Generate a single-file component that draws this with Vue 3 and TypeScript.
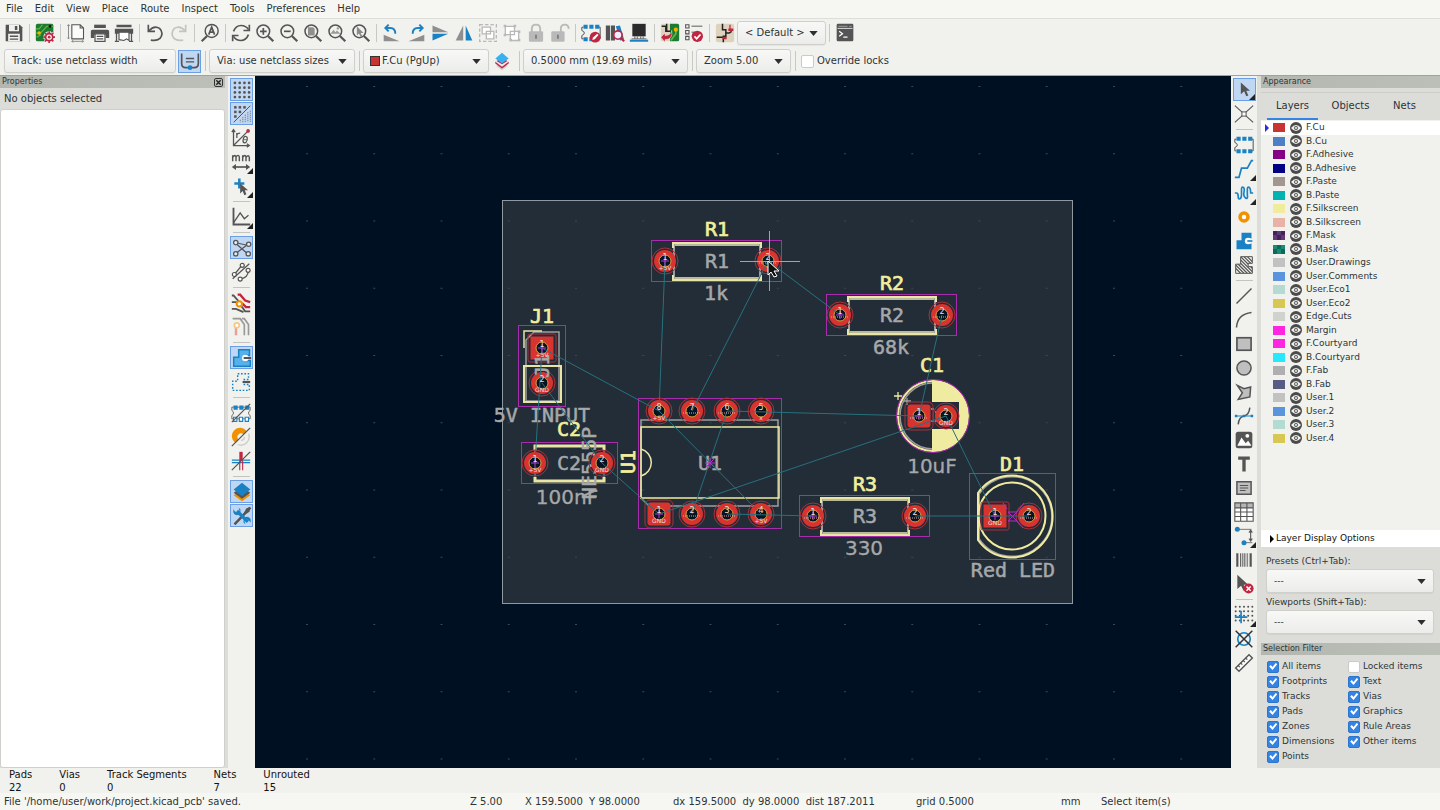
<script setup lang="ts">
import { ref } from 'vue'

type ToolItem = { icon?: string; label?: string; on?: boolean; more?: boolean; off?: boolean }
type Pad = { x: number; y: number; n: string; net?: string; sq?: boolean; round?: boolean; origin?: boolean }

const D = '#545454'
const B = '#1a81c4'
const R = '#bf2641'
const O = '#f29100'
const G = '#b9b9b9'
const lens = `<circle cx="10" cy="10" r="7.6" fill="none" stroke="${D}" stroke-width="1.8"/><path d="M15.5 15.5 22 22" stroke="${D}" stroke-width="2.6"/>`
const chip = `<path d="M3 5H1v4q3 1 3 3t-3 3v4h2M21 5h2v14h-2" fill="none" stroke="${D}" stroke-width="1.2"/><g fill="${B}"><path d="M3 2h5v5H3zM10 2h5v5h-5zM17 2h5v5h-5zM3 17h5v5H3zM10 17h5v5h-5zM17 17h5v5h-5z"/></g>`

const icons: Record<string, string> = {
  save: `<path d="M2 2h17l3 3v17H2z" fill="${D}"/><path d="M6 2h12v8H6zM5 13h14v9H5z" fill="#f1f2ee"/><path d="M13 3.5h3v5h-3zM7 15h10v1.8H7zM7 18.5h10v1.5H7z" fill="${D}"/>`,
  board: `<rect x="1" y="1" width="21" height="21" rx="2" fill="#1d7a33"/><path d="M1 7h4l4-5M1 12h6l7-8h8M2 17l5-3" fill="none" stroke="#65b63c" stroke-width="1.4"/><circle cx="5" cy="12" r="2.2" fill="#e6b800"/><circle cx="18" cy="4" r="1.6" fill="#111"/><path d="M17 10v14M10 17h14M12 12l10 10M22 12 12 22" stroke="#f3f3f3" stroke-width="4"/><circle cx="17" cy="17" r="5.2" fill="${R}"/><path d="M17 10v14M10 17h14M12 12l10 10M22 12 12 22" stroke="${R}" stroke-width="2"/><circle cx="17" cy="17" r="3.2" fill="#f3f3f3"/><circle cx="17" cy="17" r="1.6" fill="${R}"/>`,
  page: `<path d="M7 2h10l4 4v13H7zM17 2v4h4" fill="#fbfbfa" stroke="${D}" stroke-width="1.3"/><path d="M3 2v17M1.5 3.5 3 2l1.5 1.5M1.5 17.5 3 19l1.5-1.5M7 22h14M8.5 20.5 7 22l1.5 1.5M19.5 20.5 21 22l-1.5 1.5" fill="none" stroke="#777"/>`,
  print: `<path d="M5 2h14v4H5z" fill="${D}"/><path d="M3 8h18q2 0 2 2v8h-4v-4H5v4H1v-8q0-2 2-2z" fill="${D}"/><path d="M6 13h12v9H6z" fill="#fff" stroke="${D}" stroke-width="1.5"/><path d="M8 16h8M8 19h8" stroke="${D}" stroke-width="1.3"/>`,
  plot: `<path d="M3 2h18v3H3zM1 7h22v6H1z" fill="${D}"/><path d="M3 12v10M21 12v10M1 22h5M18 22h5" stroke="${D}" stroke-width="1.5"/><path d="M6 11h12v10l-3-2-3 2-6-1z" fill="#fff" stroke="${D}" stroke-width="1.4"/>`,
  undo: `<path d="M4 2v8h8" fill="none" stroke="${D}" stroke-width="2"/><path d="M4.5 9.5Q11 2 17.5 6.5Q23 12 18 18.5Q14 22 7 20.5" fill="none" stroke="${D}" stroke-width="2"/>`,
  redo: `<path d="M20 2v8h-8" fill="none" stroke="#c2c4c0" stroke-width="2"/><path d="M19.5 9.5Q13 2 6.5 6.5Q1 12 6 18.5Q10 22 17 20.5" fill="none" stroke="#c2c4c0" stroke-width="2"/>`,
  find: `<circle cx="14" cy="9.5" r="7.8" fill="none" stroke="${D}" stroke-width="1.7"/><path d="M8.5 15.5 2 22" stroke="${D}" stroke-width="2.6"/><path d="m10.5 14 3.5-9 3.5 9M12 11h4" fill="none" stroke="${D}" stroke-width="2"/>`,
  refresh: `<path d="M3 10Q6 3 12 3q6 0 9 5M21 14q-3 7-9 7-6 0-9-5" fill="none" stroke="${D}" stroke-width="2"/><path d="M22 2v7h-7M2 22v-7h7" fill="none" stroke="${D}" stroke-width="2"/>`,
  zin: lens + `<path d="M6 10h8M10 6v8" stroke="${D}" stroke-width="2"/>`,
  zout: lens + `<path d="M6 10h8" stroke="${D}" stroke-width="2"/>`,
  zfit: `<path d="M6 5h6l2 2v8H6z" fill="#8f8f8f"/>` + lens,
  zobj: `<path d="m4 13 4-5 2 3 2-2 4 4z" fill="#9a9a9a"/><circle cx="13" cy="6.5" r="1.4" fill="#9a9a9a"/>` + lens,
  zsel: `<path d="M7 4v11l2.5-2.5 2 4 2-1-2-3.5h3.5z" fill="#8a8a8a"/>` + lens,
  rccw: `<path d="M2 14v8h19z" fill="#8f8f8f"/><path d="M8 2 4 6l4 4M5 6h5q6 0 6 7" fill="none" stroke="${B}" stroke-width="2.3"/>`,
  rcw: `<path d="M22 14v8H3z" fill="#8f8f8f"/><path d="m16 2 4 4-4 4M19 6h-5q-6 0-6 7" fill="none" stroke="${B}" stroke-width="2.3"/>`,
  mirv: `<path d="M3 3v8h19z" fill="#8f8f8f"/><path d="M3 21v-8h19z" fill="${B}"/>`,
  mirh: `<path d="M2 21h9V3z" fill="#8f8f8f"/><path d="M22 21h-8V3z" fill="${B}"/>`,
  group: `<path d="M2 2h20v20H2z" fill="none" stroke="${G}" stroke-width="1.6" stroke-dasharray="4 2.5"/><path d="M5 5h10v8H5zM10 10h9v9h-9z" fill="#fff" stroke="${G}" stroke-width="1.6"/>`,
  ungroup: `<path d="M4 4h11v10H4zM10 10h10v11H10z" fill="#fff" stroke="${G}" stroke-width="1.6"/><g fill="${G}"><path d="M2 2h3v3H2zM14 2h3v3h-3zM2 13h3v3H2zM19 9h3v3h-3zM19 19h3v3h-3zM9 19h3v3H9z"/></g>`,
  lock: `<path d="M7 11V7q0-5 5-5t5 5v4" fill="none" stroke="${G}" stroke-width="2.2"/><rect x="3.5" y="10" width="17" height="12.5" rx="1.5" fill="${G}"/><path d="M12 14v5" stroke="#777" stroke-width="2"/>`,
  unlock: `<path d="M13 11V7q0-5 5-5 4 0 4.5 5" fill="none" stroke="${G}" stroke-width="2.2"/><rect x="1.5" y="10" width="16" height="12.5" rx="1.5" fill="${G}"/><path d="M9.5 14v5" stroke="#777" stroke-width="2"/>`,
  fped: chip + `<circle cx="17" cy="17" r="6.5" fill="${R}"/><path d="m13.5 20.5 1-3 5-4.5 1.5 1.5-4.5 5z" fill="#fff"/>`,
  fplib: `<path d="M1 3h5v18H1zM7 3h5v18H7z" fill="${D}"/><path d="m13 4 5-1 5 17-5 1z" fill="${B}"/><circle cx="15.5" cy="14.5" r="5" fill="#eef" stroke="${R}" stroke-width="2"/><path d="m19 18 4 4" stroke="${R}" stroke-width="2.5"/>`,
  v3d: `<path d="M4 1h16v15H4z" fill="#2b2b2b"/><path d="M7 16v3M10 16v3M14 16v3M17 16v3" stroke="#777" stroke-width="1.4"/><path d="M1 20h22v2.500H1z" fill="${B}"/><path d="M3 19h18" stroke="${D}"/>`,
  update: `<rect x="1" y="1" width="13" height="21" rx="2" fill="#dfd2bc"/><path d="M12 1h9q2 0 2 2v17q0 2-2 2h-9z" fill="#1d7a33"/><path d="M2 4h5v6h6M8 1v8" stroke="#222" stroke-width="1.8" fill="none"/><path d="m13 21 6-8V6" stroke="#65b63c" stroke-width="2" fill="none"/><circle cx="19" cy="8" r="2.5" fill="#e6b800"/><path d="m1 17 5-5v3q7 0 8-6 2 11-8 11v3z" fill="${R}" stroke="#f3f3f3" stroke-width=".6"/>`,
  drc: `<path d="M2 2h4v4H2zM2 9h4v4H2zM2 16h4v4H2z" fill="none" stroke="${D}" stroke-width="1.3"/><path d="M9 4h13M9 11h4" stroke="#8d8d8d" stroke-width="1.8"/><circle cx="16" cy="16" r="6.8" fill="${R}"/><path d="m12.5 16 2.7 2.8 4.6-5" fill="none" stroke="#fff" stroke-width="2"/>`,
  sch: `<rect x="1" y="1" width="22" height="22" rx="3" fill="#dfd2bc"/><path d="M9 1v7h4v8h-3v7M2 17h8M13 12h4l3-2" stroke="#222" stroke-width="1.8" fill="none"/><path d="M16 8h6M9 18h5" stroke="${R}" stroke-width="3"/><path d="M18 2v6" stroke="${R}" stroke-width="1.5"/>`,
  term: `<rect x="2" y="1" width="20" height="21" rx="1.5" fill="${D}"/><path d="M4 4h11M17 4h3" stroke="#aaa"/><path d="M3 6.5h18" stroke="#f0f0f0"/><path d="m5 10 4 3-4 3M10 17h5" fill="none" stroke="#fff" stroke-width="1.5"/>`,
  shape: `<path d="M2 3v12q0 5 5 5h10q5 0 5-5V3" fill="none" stroke="${D}" stroke-width="2"/><path d="M7 9h10M7 13h10" stroke="${D}" stroke-width="1.6"/><circle cx="12" cy="20" r="2.8" fill="${B}"/>`,
  pair: `<path d="m12 14 7 4-7 5-7-5z" fill="#cfcfcb"/><path d="m12 8 8 5v2l-8 6-8-6v-2z" fill="${R}"/><path d="m12 16 8-5v2l-8 6-8-6v-2z" fill="#e8e8f0"/><path d="m12 2 8 7-8 6-8-6z" fill="#37b2ef"/>`,
  grid: [3, 8.7, 14.4, 20].map(y => [3, 8.7, 14.4, 20].map(x => `<circle cx="${x + 0.5}" cy="${y + 0.5}" r="1.6" fill="${D}"/>`).join('')).join(''),
  gridov: [2.5, 8, 13.5].map((y, i) => [2.5, 8, 13.5].slice(0, 3 - i).map(x => `<rect x="${x}" y="${y}" width="3" height="3" fill="${D}"/>`).join('')).join('') + `<path d="M22 2 2 22" stroke="${D}" stroke-width="1.2"/><path d="M22 8v14M19 10v12M16 13v9M13 16v6M10 19v3" stroke="#777" stroke-width="1.4" stroke-dasharray="1.2 1.2"/>`,
  polar: `<path d="M3 2v19h19M1 5l2-3 2 3M19 19l3 2-3 2M3 21 20 4" fill="none" stroke="${D}" stroke-width="1.5"/><circle cx="20.5" cy="3.5" r="2.2" fill="${R}"/><path d="M7 12V6M7 8q1-2 4-2" fill="none" stroke="${D}" stroke-width="1.5"/><ellipse cx="17" cy="14" rx="2.4" ry="4" fill="none" stroke="${D}" stroke-width="1.4" transform="rotate(15 17 14)"/><path d="M15 14h4" stroke="${D}"/>`,
  mm: `<path d="M2 11V4m0 2.5Q5 2 6 6v5m0-5q3-4 4 0v5M14 11V4m0 2.5q3-4.5 4 0v4.5m0-4.500q3-4 4 0v4.500" fill="none" stroke="${D}" stroke-width="1.7"/><path d="M3 18h18" stroke="${D}" stroke-width="2"/><path d="m1 18 5-3.5v7zM23 18l-5-3.5v7z" fill="${D}"/>`,
  cursor: `<path d="M10 3v12M4 9h12" stroke="${B}" stroke-width="3"/><path d="M11 9v12l3-3 2 5 2.5-1-2-5h4z" fill="${D}"/>`,
  angle: `<path d="M3 1v20h20" fill="none" stroke="${D}" stroke-width="2.2"/><path d="m3 19 8-12 5 7 5-4" fill="none" stroke="${D}" stroke-width="1.6"/>`,
  rats: `<path d="M4 6 20 20M4 19 20 7M6 6l14 3" stroke="${D}" stroke-width="1.5"/><g fill="#e2ebf6" stroke="${D}" stroke-width="1.5"><circle cx="4.5" cy="5.5" r="2.6"/><circle cx="20" cy="7.5" r="2.6"/><circle cx="4.5" cy="19" r="2.6"/><circle cx="19.5" cy="19" r="2.6"/></g>`,
  ratsc: `<path d="M22 2 2 20M4 15 13 4M11 20q9 0 10-10" fill="none" stroke="${D}" stroke-width="1.5"/><g fill="#fff" stroke="${D}" stroke-width="1.4"><circle cx="4" cy="15" r="2.4"/><circle cx="13.5" cy="4" r="2.4"/><circle cx="11" cy="20.5" r="2.4"/><circle cx="20.5" cy="10" r="2.4"/></g>`,
  netcol: `<path d="M8 2h3l6 7 6 2M13 12l5 5h5" fill="none" stroke="${R}" stroke-width="2.8"/><path d="M1 3h2l7 8M1 11h5l3 2M1 19h5l9 4M12 15l5 7h6" fill="none" stroke="${D}" stroke-width="2.2"/><circle cx="10" cy="13" r="3.2" fill="#fff" stroke="${O}" stroke-width="2.4"/>`,
  fade: `<path d="M2 2h9l5 7v13M13 2h3l5 7v13" fill="none" stroke="#999" stroke-width="2"/><path d="M6 11v11" stroke="#e8a09a" stroke-width="3"/><circle cx="7" cy="10" r="3" fill="#fff" stroke="#f5c983" stroke-width="2"/>`,
  zone: `<path d="M8 2h13v7h-6v6h7v7H2V11h6z" fill="#55b0ec" stroke="${B}" stroke-width="1.8"/><circle cx="16" cy="12" r="4" fill="#fff"/><path d="M14 12h9" stroke="${D}" stroke-width="2.4"/>`,
  zoneo: `<path d="M8 2h13v7h-6v6h7v7H2V11h6z" fill="none" stroke="${B}" stroke-width="1.7" stroke-dasharray="2 2"/><path d="M14 12h9" stroke="${D}" stroke-width="2.6"/>`,
  fpout: `<path d="M1 5h22v4q-2 1-2 3t2 3v4H1v-4q2-1 2-3t-2-3z" fill="none" stroke="${D}"/><path d="M3 3h5v5H3zM10 3h5v5h-5zM17 3h5v5h-5z" fill="${B}"/><path d="M3 17h4v5H3zM10 17h4v5h-4zM17 17h4v5h-4z" fill="#fff" stroke="${B}" stroke-width="1.3"/><path d="M23 1 1 23" stroke="${D}" stroke-width="1.5"/>`,
  viao: `<path d="M19 5a10 10 0 1 0-14 14l4-4a4 4 0 1 1 6-6z" fill="${O}"/><path d="M21 8a10 10 0 0 1-13 13M16 12a4 4 0 0 1-4 4" fill="none" stroke="#ccc" stroke-width="1.6"/><path d="M23 1 1 23" stroke="${D}" stroke-width="1.5"/>`,
  tracko: `<path d="M1 11h22M1 14h22" stroke="${B}" stroke-width="1.5"/><path d="M12 1v11" stroke="${R}" stroke-width="4"/><path d="M10.5 12v11M14 12v11" stroke="${R}" stroke-width="1.3"/><path d="M23 1 1 23" stroke="${D}" stroke-width="1.5"/>`,
  layers: `<path d="m12 9 10 7-10 7-10-7z" fill="${O}"/><path d="m12 6 10 7-10 7-10-7z" fill="${D}"/><path d="m12 1 10 8-10 8L2 9z" fill="${B}"/>`,
  tools: `<path d="M22 2 3 22" stroke="${D}" stroke-width="3"/><path d="m22 1-5 2-3 6 2 1 5-3z" fill="${D}"/><path d="m6 6 13 13" stroke="${B}" stroke-width="4"/><path d="M2 4q-2 6 4 7 5-1 4-7L8 2l1 4-3 2-3-2zM22 20q2-6-4-7-5 1-4 7l2 2-1-4 3-2 3 2z" fill="${B}"/>`,
  arrow: `<path d="M7 3v14l4-3.500 2.500 6 2.500-1-2.500-5.500H18z" fill="${D}"/>`,
  cross: `<path d="m1 2 9 8M23 2l-9 8M1 22l9-8M23 22l-9-8" stroke="${D}" stroke-width="1.3"/><rect x="9.5" y="9.5" width="5" height="5" fill="#fff" stroke="${D}" stroke-width="1.2"/>`,
  chip,
  route: `<path d="M1 22h5l3-11h7l5-9h2" fill="none" stroke="${B}" stroke-width="2"/>`,
  tune: `<path d="M1 12h2q2 0 2 4t2 3 2-5V8q0-4 2-3t1 6 2 7 2-4V8q0-4 2-3t2 7h3" fill="none" stroke="${B}" stroke-width="2"/>`,
  via: `<circle cx="12" cy="12" r="4.800" fill="#fff" stroke="${O}" stroke-width="4.2"/>`,
  fill: `<path d="M9 2h12v7h-5v6h5v7H3V11h6z" fill="${B}"/><circle cx="17" cy="12" r="4" fill="#fff"/><path d="M16 12h6" stroke="${B}" stroke-width="2"/>`,
  rule: `<clipPath id="hatch"><path d="M8 2h14v8h-5v4h5v8H2V11h6z"/></clipPath><g clip-path="url(#hatch)"><path d="M-8 2l22 22M-4 2l22 22M0 2l22 22M4 2l22 22M8 2l22 22M12 2l22 22M16 2l22 22M-12 2l22 22" stroke="${D}" stroke-width="1.500"/></g><path d="M8 2h14v8h-5v4h5v8H2V11h6z" fill="none" stroke="${D}" stroke-width="1.200"/>`,
  line: `<path d="M3 21 21 3" stroke="${D}" stroke-width="1.8"/>`,
  arc: `<path d="M3 21Q4 5 21 3" fill="none" stroke="${D}" stroke-width="1.8"/>`,
  rect: `<rect x="3.500" y="4.500" width="17" height="15" fill="#bfbfbf" stroke="${D}" stroke-width="2"/>`,
  circ: `<circle cx="12" cy="12" r="8.500" fill="#bfbfbf" stroke="${D}" stroke-width="1.8"/>`,
  poly: `<path d="m4 4 8 4 8-2-1 12-14 3 5-8z" fill="#bfbfbf" stroke="${D}" stroke-width="1.8"/>`,
  bez: `<path d="M5 22q1-9 7-10 6-1 7-10" fill="none" stroke="${D}" stroke-width="1.8"/><path d="M2 12h20" stroke="${B}" stroke-width="1.2"/><path d="M1 10.5h3v3H1zM10.5 10.5h3v3h-3zM20 10.5h3v3h-3z" fill="${B}"/>`,
  image: `<rect x="2" y="2" width="20" height="20" rx="3" fill="${D}"/><path d="m4 19 5-10 5 7 3-3 4 6z" fill="#fff"/><circle cx="16" cy="7" r="2.3" fill="#fff"/>`,
  text: `<path d="M5 3h14v4h-5v14h-4V7H5z" fill="${D}"/>`,
  tbox: `<rect x="3.500" y="4.500" width="17" height="15" fill="#bfbfbf" stroke="${D}" stroke-width="1.8"/><path d="M7 9h10M7 12h10M7 15h7" stroke="${D}" stroke-width="1.3"/>`,
  table: `<path d="M1 1h22v22H1z" fill="#fff"/><path d="M1 1h22v6H1z" fill="#b5b5b5"/><path d="M1 1h22v22H1zM1 7h22M1 12h22M1 17.5h22M8 1v22M15.5 1v22" fill="none" stroke="${D}" stroke-width="1.3"/>`,
  dim: `<path d="M3 4h18M12 20h10" stroke="#777" stroke-width="1.2"/><path d="M20 5v13M18 8l2-3 2 3M18 15l2 3 2-3" fill="none" stroke="${D}" stroke-width="1.3"/><circle cx="4" cy="4" r="3" fill="${B}"/><circle cx="12" cy="20" r="3" fill="${B}"/>`,
  bars: `<path d="M4 4v16M20 4v16" stroke="${D}" stroke-width="2.6"/><path d="M8 4v16M13 4v16" stroke="${D}" stroke-width="1.3"/><path d="M16 4v16M10.5 4v16" stroke="#888" stroke-width="1.800"/>`,
  del: `<path d="M4 1v17l4.5-4 3 6 3-1.5-3-5.5H17z" fill="${D}"/><circle cx="17.5" cy="17.5" r="6" fill="${R}"/><path d="m15 15 5 5M20 15l-5 5" stroke="#fff" stroke-width="1.8"/>`,
  gorig: [2, 7, 12, 17, 22].map(x => [2, 7.5, 13, 18.5].map(y => `<circle cx="${x}" cy="${y}" r="1.2" fill="${D}"/>`).join('')).join('') + `<path d="M8.5 7v15M1 14.5h15" stroke="${B}" stroke-width="2"/>`,
  dorig: `<circle cx="12" cy="12" r="7.5" fill="none" stroke="${B}" stroke-width="2"/><path d="m2 2 20 20M22 2 2 22" stroke="#333" stroke-width="1.8"/>`,
  ruler: `<path d="M2 18 18 2l4 4L6 22z" fill="#fff" stroke="${D}" stroke-width="1.7"/><path d="m14 6 2 2M11 9l2 2M8 12l2 2M5 15l2 2" stroke="${D}" stroke-width="1.4"/>`,
}

const sep: ToolItem = {}
const t = (icon: string, label: string, extra: Partial<ToolItem> = {}): ToolItem => ({ icon, label, ...extra })

const mainTools: ToolItem[] = [
  t('save', 'Save'), sep, t('board', 'Board setup'), sep, t('page', 'Page settings'), t('print', 'Print'), t('plot', 'Plot'), sep,
  t('undo', 'Undo'), t('redo', 'Redo', { off: true }), sep, t('find', 'Find'), sep, t('refresh', 'Refresh'), t('zin', 'Zoom in'),
  t('zout', 'Zoom out'), t('zfit', 'Zoom to fit'), t('zobj', 'Zoom to objects'), t('zsel', 'Zoom to selection'), sep,
  t('rccw', 'Rotate left'), t('rcw', 'Rotate right'), t('mirv', 'Mirror vertically'), t('mirh', 'Mirror horizontally'),
  t('group', 'Group', { off: true }), t('ungroup', 'Ungroup', { off: true }), t('lock', 'Lock', { off: true }), t('unlock', 'Unlock', { off: true }), sep,
  t('fped', 'Footprint editor'), t('fplib', 'Footprint libraries'), t('v3d', '3D viewer'), sep, t('update', 'Update from schematic'), t('drc', 'Rules checker'), sep,
  t('sch', 'Schematic editor'),
]
const leftTools: ToolItem[] = [
  t('grid', 'Show grid', { on: true }), t('gridov', 'Grid overrides', { on: true }), t('polar', 'Polar coordinates'), t('mm', 'Millimeters', { more: true }),
  t('cursor', 'Cursor shape', { more: true }), sep, t('angle', 'Line mode', { more: true }), sep, t('rats', 'Show ratsnest', { on: true }), t('ratsc', 'Curved ratsnest'), sep,
  t('netcol', 'Net highlight'), t('fade', 'Inactive layers'), sep, t('zone', 'Zone fills', { on: true }), t('zoneo', 'Zone outlines'), sep,
  t('fpout', 'Sketch pads'), t('viao', 'Sketch vias'), t('tracko', 'Sketch tracks'), sep, t('layers', 'Appearance', { on: true }), t('tools', 'Properties', { on: true }),
]
const rightTools: ToolItem[] = [
  t('arrow', 'Select', { on: true, more: true }), t('cross', 'Local ratsnest'), sep, t('chip', 'Place footprint'), t('route', 'Route track', { more: true }),
  t('tune', 'Tune length', { more: true }), t('via', 'Place via'), t('fill', 'Draw zone'), t('rule', 'Rule area'), sep, t('line', 'Line'), t('arc', 'Arc'),
  t('rect', 'Rectangle'), t('circ', 'Circle'), t('poly', 'Polygon'), t('bez', 'Bezier'), t('image', 'Image'), t('text', 'Text'), t('tbox', 'Text box'),
  t('table', 'Table'), t('dim', 'Dimension', { more: true }), t('bars', 'Barcode'), t('del', 'Delete'), sep, t('gorig', 'Grid origin', { more: true }),
  t('dorig', 'Drill origin'), t('ruler', 'Measure'),
]

const menus = ['File', 'Edit', 'View', 'Place', 'Route', 'Inspect', 'Tools', 'Preferences', 'Help']
const layers: [string, string, string?][] = [
  ['F.Cu', '#c83434'], ['B.Cu', '#4d7fc4'], ['F.Adhesive', '#840084'], ['B.Adhesive', '#000084'], ['F.Paste', '#a39690'], ['B.Paste', '#00b2b2'],
  ['F.Silkscreen', '#f0ec9b'], ['B.Silkscreen', '#e8b2a7'], ['F.Mask', '#633a78', '#44225a'], ['B.Mask', '#0c6a5c', '#1f8a72'],
  ['User.Drawings', '#c2c2c2'], ['User.Comments', '#5994dc'], ['User.Eco1', '#b4dbd2'], ['User.Eco2', '#d8c852'], ['Edge.Cuts', '#d0d2cd'],
  ['Margin', '#ff26e2'], ['F.Courtyard', '#ff26e2'], ['B.Courtyard', '#26e9ff'], ['F.Fab', '#afafaf'], ['B.Fab', '#585d84'],
  ['User.1', '#c2c2c2'], ['User.2', '#5994dc'], ['User.3', '#b4dbd2'], ['User.4', '#d8c852'],
]
const filters = ref([
  ['All items', true], ['Locked items', false], ['Footprints', true], ['Text', true], ['Tracks', true], ['Vias', true], ['Pads', true],
  ['Graphics', true], ['Zones', true], ['Rule Areas', true], ['Dimensions', true], ['Other items', true], ['Points', true],
] as [string, boolean][])
const stats = [['Pads', '22'], ['Vias', '0'], ['Track Segments', '0'], ['Nets', '7'], ['Unrouted', '15']]

/* Board geometry, in canvas units */
const gridDots = Array.from({ length: 14 }, (_, i) => Array.from({ length: 11 }, (_, j) => ({ x: 306 + i * 67.25, y: 86 + j * 67.25 }))).flat()
const resistors = [
  { x: 665, y: 261, name: 'R1', value: '1k' },
  { x: 840, y: 315, name: 'R2', value: '68k' },
  { x: 813, y: 516, name: 'R3', value: '330' },
]
const pads: Pad[] = [
  { x: 665, y: 261, n: '1', net: '+5V', origin: true }, { x: 768, y: 261, n: '2' },
  { x: 840, y: 315, n: '1', origin: true }, { x: 942, y: 315, n: '2' },
  { x: 813, y: 516, n: '1', origin: true }, { x: 915, y: 516, n: '2' },
  { x: 542, y: 348, n: '1', net: '+5V', sq: true, origin: true }, { x: 542, y: 383, n: '2', net: 'GND' },
  { x: 535, y: 463, n: '1', net: '+5V', origin: true }, { x: 602, y: 463, n: '2', net: 'GND' },
  { x: 659, y: 411, n: '8', net: '+5V' }, { x: 692, y: 411, n: '7' }, { x: 727, y: 411, n: '6' }, { x: 761, y: 411, n: '5', net: 'x' },
  { x: 659, y: 514, n: '1', net: 'GND', round: true, origin: true }, { x: 692, y: 514, n: '2' }, { x: 727, y: 514, n: '3' }, { x: 761, y: 514, n: '4', net: '+5V' },
  { x: 919, y: 416, n: '1', round: true, origin: true }, { x: 946, y: 416, n: '2', net: 'GND' },
  { x: 995, y: 516, n: '1', net: 'GND', sq: true, origin: true }, { x: 1029, y: 516, n: '2' },
]
const rats = [
  [665, 261, 659, 411], [768, 261, 692, 411], [768, 261, 840, 315], [942, 315, 919, 416], [542, 348, 659, 411], [659, 411, 761, 514],
  [727, 411, 692, 514], [727, 411, 919, 416], [659, 514, 946, 416], [542, 348, 535, 463], [542, 383, 602, 463], [602, 463, 659, 514],
  [946, 416, 995, 516], [915, 516, 1029, 516], [727, 514, 813, 516],
]
const tab = ref('Layers')
const override = ref(false)
</script>

<template>
  <div class="app">
    <nav class="menubar">
      <button v-for="m in menus" :key="m" type="button">{{ m }}</button>
    </nav>

    <div class="toolbar" role="toolbar" aria-label="Main">
      <template v-for="(it, i) in mainTools" :key="i">
        <button v-if="it.icon" type="button" class="tool" :aria-label="it.label" :disabled="it.off"><svg viewBox="0 0 24 24" v-html="icons[it.icon]" /></button>
        <span v-else class="sep" />
      </template>
      <div class="combo c-default">
        <select aria-label="Configuration"><option>&lt; Default &gt;</option></select>
        <svg class="caret" viewBox="0 0 10 6"><path d="M0 0h10L5 6z" /></svg>
      </div>
      <span class="sep" />
      <button type="button" class="tool" aria-label="Scripting console"><svg viewBox="0 0 24 24" v-html="icons.term" /></button>
    </div>

    <div class="toolbar second" role="toolbar" aria-label="Options">
      <div class="combo c-track">
        <select aria-label="Track width"><option>Track: use netclass width</option></select>
        <svg class="caret" viewBox="0 0 10 6"><path d="M0 0h10L5 6z" /></svg>
      </div>
      <button type="button" class="tool on" aria-label="Use existing width"><svg viewBox="0 0 24 24" v-html="icons.shape" /></button>
      <span class="sep" />
      <div class="combo c-via">
        <select aria-label="Via size"><option>Via: use netclass sizes</option></select>
        <svg class="caret" viewBox="0 0 10 6"><path d="M0 0h10L5 6z" /></svg>
      </div>
      <span class="sep" />
      <div class="combo c-layer">
        <i class="chipc" />
        <select aria-label="Active layer"><option>F.Cu (PgUp)</option></select>
        <svg class="caret" viewBox="0 0 10 6"><path d="M0 0h10L5 6z" /></svg>
      </div>
      <button type="button" class="tool" aria-label="Layer pair"><svg viewBox="0 0 24 24" v-html="icons.pair" /></button>
      <span class="sep" />
      <div class="combo c-grid">
        <select aria-label="Grid"><option>0.5000 mm (19.69 mils)</option></select>
        <svg class="caret" viewBox="0 0 10 6"><path d="M0 0h10L5 6z" /></svg>
      </div>
      <span class="sep" />
      <div class="combo c-zoom">
        <select aria-label="Zoom"><option>Zoom 5.00</option></select>
        <svg class="caret" viewBox="0 0 10 6"><path d="M0 0h10L5 6z" /></svg>
      </div>
      <span class="sep" />
      <label class="check override"><input v-model="override" type="checkbox" />Override locks</label>
    </div>

    <main class="work">
      <aside class="props">
        <header class="title">Properties
          <button type="button" aria-label="Close"><svg viewBox="0 0 8 8"><path d="m1.5 1.5 5 5M6.5 1.5l-5 5" stroke="#222" stroke-width="1.6" /></svg></button>
        </header>
        <p>No objects selected</p>
        <div class="sheet" />
      </aside>

      <div class="vbar" role="toolbar" aria-label="Display">
        <template v-for="(it, i) in leftTools" :key="i">
          <button v-if="it.icon" type="button" class="tool" :class="{ on: it.on, more: it.more }" :aria-label="it.label"><svg viewBox="0 0 24 24" v-html="icons[it.icon]" /></button>
          <span v-else class="hsep" />
        </template>
      </div>

      <svg class="canvas" viewBox="255 76 976 692" preserveAspectRatio="xMidYMid slice">
        <rect x="502.5" y="200.5" width="570" height="403" fill="#232d37" stroke="#8f999f" stroke-width="1" />
        <rect v-for="(d, i) in gridDots" :key="'g' + i" :x="d.x" :y="d.y" width="2" height="1" fill="#3a4856" />

        <!-- fabrication and silkscreen outlines -->
        <g fill="none">
          <g v-for="r in resistors" :key="r.name" :transform="`translate(${r.x} ${r.y})`">
            <rect x="9" y="-16" width="86" height="33" stroke="#9d9f9f" stroke-width="2" />
            <path d="M8-13v-5h88v5M8 14v5h88v-5" stroke="#e9e6a5" stroke-width="2" />
            <path d="M10-16h84M10 17h84" stroke="#b9b99b" stroke-width="2" />
            <rect class="yard" x="-13.5" y="-20.5" width="130" height="41" />
          </g>
          <path d="M535 450v-4h69v4M535 477v4h69v-4" stroke="#e9e6a5" stroke-width="3" />
          <path d="M535 450v27M604 450v27" stroke="#9d9f9f" stroke-width="1" />
          <rect class="yard" x="521.5" y="442.5" width="96" height="41" />
          <path d="M534 332h25v69h-33v-61z" stroke="#9d9f9f" stroke-width="1.5" />
          <path d="M524 348v-17h18" stroke="#e9e6a5" stroke-width="1.5" />
          <rect x="524" y="366" width="37" height="36" stroke="#e9e6a5" stroke-width="2" />
          <rect class="yard" x="518.5" y="325.5" width="47" height="81" />
          <path d="M649 506h129v-86H641v78z" stroke="#9d9f9f" stroke-width="1.5" />
          <path d="M641 427h138v71H641z" stroke="#efeba0" stroke-width="1.5" />
          <path d="M641 449a14 14 0 0 1 0 27" stroke="#e9e6a5" stroke-width="1.5" />
          <rect class="yard" x="638.5" y="398.5" width="143" height="130" />
          <circle cx="933" cy="416" r="33" stroke="#9d9f9f" stroke-width="1.5" />
          <path d="M932 380a36 36 0 0 1 0 72v-23h27v-27h-27z" fill="#efeba0" />
          <circle cx="933" cy="416" r="35" stroke="#efeba0" stroke-width="2" />
          <circle class="yard" cx="933" cy="416" r="36.5" />
          <path d="M898 392v8M894 396h8" stroke="#efeba0" stroke-width="1.3" />
          <path d="M907 398v7M903 401h8" stroke="#9d9f9f" stroke-width="1.3" />
          <path d="M931 409h3M935 412h3M931 421h3M935 421h3" stroke="#ddd" stroke-width="1" />
          <path d="M979 494a40 40 0 1 1 0 45z" stroke="#9d9f9f" stroke-width="2" />
          <path d="M978 493a41 41 0 1 1 0 47z" stroke="#efeba0" stroke-width="2" />
          <circle cx="1012" cy="516" r="33.5" stroke="#efeba0" stroke-width="2" />
          <rect class="yard" x="969.5" y="473.5" width="86" height="86" />
        </g>

        <!-- gray fabrication text -->
        <g class="fab">
          <text x="542" y="422">5V INPUT</text>
          <text x="569" y="470">C2</text>
          <text class="plain" x="567" y="504">100nF</text>
          <text transform="translate(596 463) rotate(-90)">NE555P</text>
          <text x="710" y="470">U1</text>
          <text class="plain" x="932" y="473">10uF</text>
          <text x="1013" y="577">Red LED</text>
          <template v-for="r in resistors" :key="r.value">
            <text :x="r.x + 52" :y="r.y + 7">{{ r.name }}</text>
            <text :class="{ plain: r.value === '330' }" :x="r.x + 51" :y="r.y + 39">{{ r.value }}</text>
          </template>
        </g>
        <g class="silk">
          <text v-for="r in resistors" :key="r.name" :x="r.x + 52" :y="r.y - 25">{{ r.name }}</text>
          <text x="542" y="323">J1</text>
          <text x="569" y="436">C2</text>
          <text transform="translate(635 462) rotate(-90)">U1</text>
          <text x="932" y="372">C1</text>
          <text x="1012" y="471">D1</text>
        </g>

        <!-- pads -->
        <g v-for="(p, i) in pads" :key="'p' + i" :transform="`translate(${p.x} ${p.y})`">
          <template v-if="p.sq || p.round">
            <rect x="-14" y="-14" width="28" height="28" :rx="p.round ? 5 : 2" fill="none" stroke="#a8303a" />
            <rect x="-11.5" y="-11.5" width="23" height="23" :rx="p.round ? 3 : 0" fill="#d93330" />
          </template>
          <template v-else>
            <circle r="13" fill="none" stroke="#a8303a" />
            <circle r="11" fill="#d93330" />
          </template>
          <circle r="6" fill="#071421" stroke="#d4a13f" stroke-width="1" />
        </g>
        <g class="fab"><text transform="translate(549 366) rotate(-90)">J1</text></g>
        <g stroke="#26717d" stroke-width="1"><line v-for="(l, i) in rats" :key="'l' + i" :x1="l[0]" :y1="l[1]" :x2="l[2]" :y2="l[3]" /></g>
        <g class="padtext">
          <template v-for="(p, i) in pads" :key="'t' + i">
            <path v-if="p.origin" :d="`M${p.x - 4} ${p.y}h8M${p.x} ${p.y - 4}v8`" stroke="#b43ed8" stroke-width="1" />
            <text :x="p.x" :y="p.y - 1" class="num">{{ p.n }}</text>
            <text v-if="p.net" :x="p.x" :y="p.y + 9" class="net">{{ p.net }}</text>
            <path v-else :d="`M${p.x - 9} ${p.y + 2}h18`" stroke="#e7a19a" stroke-width="1" stroke-dasharray="1 1" />
          </template>
        </g>
        <g fill="none" stroke="#b02fc0" stroke-width="1">
          <path d="m706 459 8 8M714 459l-8 8M710 458v10M705 463h10" />
          <path d="m1008 512 9 9M1017 512l-9 9M1008 512h9M1008 521h9M1017 512l7-9M1017 521l6 7M1003 503l4 6" />
        </g>

        <path d="M740 261.5h60M769.5 231v60" stroke="#9da6a8" stroke-width="1" />
        <path d="M768 261v14l3-3 3 5 3-1-3-5h5z" fill="#111" stroke="#fff" stroke-width="1" />
      </svg>

      <div class="vbar right" role="toolbar" aria-label="Drawing">
        <template v-for="(it, i) in rightTools" :key="i">
          <button v-if="it.icon" type="button" class="tool" :class="{ on: it.on, more: it.more }" :aria-label="it.label"><svg viewBox="0 0 24 24" v-html="icons[it.icon]" /></button>
          <span v-else class="hsep" />
        </template>
      </div>

      <aside class="side">
        <header class="title">Appearance</header>
        <div class="tabs" role="tablist">
          <button v-for="n in ['Layers', 'Objects', 'Nets']" :key="n" type="button" role="tab" :aria-selected="tab === n" :class="{ active: tab === n }" @click="tab = n">{{ n }}</button>
        </div>
        <div class="layers">
          <ul>
            <li v-for="(l, i) in layers" :key="l[0]" :class="{ current: i === 0 }">
              <svg class="mark" viewBox="0 0 4 8"><path v-if="i === 0" d="M0 0l4 4-4 4z" fill="#2a2ae0" /></svg>
              <svg class="sw" viewBox="0 0 12 9">
                <rect width="12" height="9" :fill="l[1]" />
                <path v-if="l[2]" d="M0 0h4v4H0zM8 0h4v4H8zM4 4h4v5H4z" :fill="l[2]" />
              </svg>
              <svg class="eye" viewBox="0 0 12 12"><circle cx="6" cy="6" r="6" fill="#4b4b4b" /><path d="M1 6q5-6 10 0-5 6-10 0z" fill="#f1f2ee" /><circle cx="6" cy="6" r="1.700" fill="none" stroke="#4b4b4b" stroke-width=".8" /><circle cx="6" cy="6" r=".6" fill="#4b4b4b" /></svg>
              <span>{{ l[0] }}</span>
            </li>
          </ul>
        </div>
        <button type="button" class="disclose"><svg viewBox="0 0 4 8"><path d="M0 0l4 4-4 4z" /></svg>Layer Display Options</button>
        <div class="presets">
          <label for="preset">Presets (Ctrl+Tab):</label>
          <div class="combo">
            <select id="preset"><option>---</option></select>
            <svg class="caret" viewBox="0 0 10 6"><path d="M0 0h10L5 6z" /></svg>
          </div>
          <label for="viewport">Viewports (Shift+Tab):</label>
          <div class="combo">
            <select id="viewport"><option>---</option></select>
            <svg class="caret" viewBox="0 0 10 6"><path d="M0 0h10L5 6z" /></svg>
          </div>
        </div>
        <header class="title">Selection Filter</header>
        <div class="filter">
          <label v-for="f in filters" :key="f[0]" class="check"><input v-model="f[1]" type="checkbox" />{{ f[0] }}</label>
        </div>
      </aside>
    </main>

    <dl class="stats">
      <div v-for="s in stats" :key="s[0]"><dt>{{ s[0] }}</dt><dd>{{ s[1] }}</dd></div>
    </dl>
    <footer class="status">
      <span class="grow">File '/home/user/work/project.kicad_pcb' saved.</span>
      <span class="s-z">Z 5.00</span>
      <span class="s-xy">X 159.5000&nbsp; Y 98.0000</span>
      <span class="s-d">dx 159.5000&nbsp; dy 98.0000&nbsp; dist 187.2011</span>
      <span class="s-g">grid 0.5000</span>
      <span class="s-u">mm</span>
      <span class="s-s">Select item(s)</span>
    </footer>
  </div>
</template>

<style>
body { margin: 0; }
</style>

<style scoped>
.app {
  display: flex;
  flex-direction: column;
  height: 100vh;
  overflow: hidden;
  box-sizing: border-box;
  background: #f1f2ee;
  color: #2e3436;
  font: 10px/12px "DejaVu Sans", sans-serif;
}
.app *, .app *::before, .app *::after { box-sizing: border-box; }
button, select, input { font: inherit; color: inherit; margin: 0; padding: 0; }
button { border: 0; background: none; }
svg { display: block; flex: none; }

.menubar { display: flex; gap: 12px; height: 19px; padding: 0 6px; background: #f6f7f3; border-bottom: 1px solid #dddeda; }
.toolbar { display: flex; align-items: center; height: 28px; padding-left: 2px; flex: none; }
.second { height: 29px; padding-left: 4px; border-bottom: 1px solid #9fa3a0; }
.tool { position: relative; width: 24px; height: 24px; flex: none; display: grid; place-items: center; }
.tool > svg { width: 20px; height: 20px; }
.tool.on { width: 23px; height: 23px; margin: 0 0 1px; background: #c0d7f3; border: 1px solid #6a9fe4; }
.second .tool.on { margin: 0 0 0 2px; }
.tool.more::after { content: ""; position: absolute; right: 0; bottom: 0; border: 3px solid; border-color: transparent #222 #222 transparent; }
.sep { width: 7px; height: 18px; flex: none; display: flex; justify-content: center; }
.sep::before { content: ""; width: 1px; background: #c6c8c3; }
.second .sep { width: 8px; height: 20px; }
.combo { position: relative; height: 24px; flex: none; }
.combo select {
  appearance: none; width: 100%; height: 24px; padding: 0 16px 0 7px; border: 1px solid #cfd0cc; border-radius: 3px;
  background: linear-gradient(#f8f8f6, #ecedea); box-shadow: 0 1px 1px #0000000d; text-overflow: clip;
}
.caret { position: absolute; right: 8px; top: 10px; width: 9px; height: 5px; fill: #2b2f30; pointer-events: none; }
.c-default { width: 89px; }
.c-track { width: 172px; }
.c-via { width: 146px; }
.c-layer { width: 126px; }
.c-layer select { padding-left: 18px; }
.c-grid { width: 165px; }
.c-zoom { width: 95px; }
.chipc { position: absolute; left: 7px; top: 7px; width: 10px; height: 10px; background: #c83434; border: 1px solid #333; }
.c-layer + .tool { width: 26px; }
.check { display: flex; align-items: center; gap: 2px; }
.check input { appearance: none; width: 13px; height: 13px; border: 1px solid #cacbc7; border-radius: 2px; background: #fff; display: grid; flex: none; }
.check input:checked { background: #3584e4; border-color: #2c74cc; }
.check input:checked::before { content: ""; background: #fff; clip-path: polygon(12% 50%, 28% 36%, 45% 54%, 78% 14%, 92% 28%, 45% 86%); }
.override { margin-left: 2px; gap: 3px; }

.work { flex: 1; min-height: 0; display: flex; }
.title { display: flex; align-items: center; justify-content: space-between; height: 12px; padding: 0 2px; background: linear-gradient(90deg, #b4b7b0, #bcbeb8); font-size: 8px; line-height: 10px; flex: none; }
.title button { width: 9px; height: 9px; border: 1px solid #333; border-radius: 2px; }
.title svg { width: 7px; height: 7px; }
.props { width: 225px; flex: none; display: flex; flex-direction: column; background: #dcddd9; }
.props p { margin: 0; padding: 5px 4px; line-height: 12px; height: 21px; }
.sheet { flex: 1; background: #fff; border: 1px solid #cfd0cc; border-radius: 3px; }
.vbar { width: 30px; flex: none; padding: 2px 2px 0 0; display: flex; flex-direction: column; align-items: flex-end; background: linear-gradient(90deg, #dcddd9 3px, #f1f2ee 3px); }
.vbar.right { padding: 2px 5px 0 0; background: linear-gradient(90deg, #f1f2ee 26px, #dcddd9 26px); }
.hsep { width: 24px; height: 7px; display: grid; align-content: center; justify-content: center; }
.hsep::before { content: ""; width: 17px; height: 1px; background: #c2c4bf; }
.canvas { flex: 1; min-width: 0; height: 100%; background: #001023; }
.yard { stroke: #a92bae; stroke-width: 1; }
.fab text, .silk text { font: 20px "DejaVu Sans Mono", monospace; text-anchor: middle; fill: #a6a8aa; stroke: #a6a8aa; stroke-width: .5; }
.fab .plain { font-family: "DejaVu Sans", sans-serif; stroke-width: .3; }
.silk text { fill: #f2ee9c; stroke: #f2ee9c; stroke-width: .7; }
.padtext text { font-family: "DejaVu Sans", sans-serif; text-anchor: middle; fill: #f0dddd; }
.padtext .num { font-size: 8px; }
.padtext .net { font-size: 6px; }

.side { width: 179px; flex: none; display: flex; flex-direction: column; background: #dcddd9; font-size: 9px; line-height: 11px; }
.tabs { display: flex; margin-top: 4px; padding-left: 6px; gap: 7px; height: 28px; flex: none; border-top: 1px solid #cbccc8; font-size: 10px; }
.tabs button { width: 51px; border-bottom: 2px solid transparent; }
.tabs button:last-child { width: 43px; }
.tabs .active { border-color: #3584e4; }
.layers { flex: 1; min-height: 0; overflow: hidden; background: #f1f2ee; }
ul { display: grid; grid-template-rows: repeat(24, 1fr); height: 324px; margin: 1px 0 0; padding: 0; list-style: none; }
li { display: flex; align-items: center; padding-left: 4px; }
li.current { background: #fff; }
.mark { width: 4px; height: 8px; margin-right: 4px; }
.sw { width: 12px; height: 9px; margin-right: 5px; }
.eye { width: 12px; height: 12px; margin-right: 4px; }
.disclose { display: flex; align-items: center; gap: 2px; height: 17px; padding-left: 9px; background: #fff; color: #111; flex: none; }
.disclose svg { width: 4px; height: 8px; }
.presets { display: flex; flex-direction: column; padding: 9px 6px 9px 5px; flex: none; }
.presets label { height: 13px; }
.presets .combo { margin-bottom: 4px; }
.presets .combo:last-child { margin-bottom: 0; }
.filter { display: grid; grid-template-columns: 81px 1fr; grid-auto-rows: 15px; padding: 4px 0 4px 6px; flex: none; }
.filter .check { gap: 3px; }
.filter input { width: 12px; height: 12px; }

.stats { display: flex; gap: 27px; height: 25px; margin: 0; padding: 0 9px; flex: none; color: #111; line-height: 13px; }
.stats dd { margin: 0; }
.status { display: flex; align-items: center; height: 17px; padding: 0 4px; flex: none; background: #f6f7f3; }
.grow { flex: 1; }
.s-z { width: 55px; }
.s-xy { width: 148px; }
.s-d { width: 243px; }
.s-g { width: 145px; }
.s-u { width: 40px; }
.s-s { width: 335px; }
</style>
